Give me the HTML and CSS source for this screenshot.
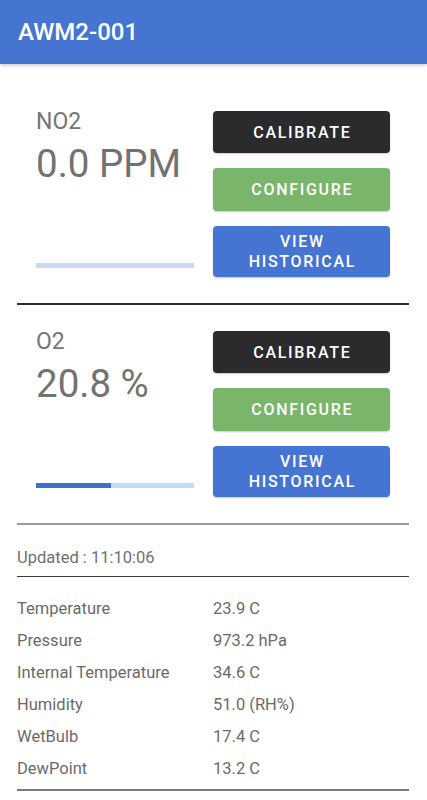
FILE: index.html
```html
<!DOCTYPE html>
<html lang="en">
<head>
<meta charset="utf-8">
<title>AWM2-001</title>
<link rel="stylesheet" href="styles.css">
</head>
<body>
<header class="appbar">AWM2-001</header>
<main class="content">
  <section class="sensor sensor-first">
    <div class="reading">
      <div class="label">NO2</div>
      <div class="value">0.0 PPM</div>
      <div class="bar"><div class="bar-fill" style="width:0%"></div></div>
    </div>
    <div class="actions">
      <button class="btn btn-dark">CALIBRATE</button>
      <button class="btn btn-green">CONFIGURE</button>
      <button class="btn btn-blue">VIEW<br>HISTORICAL</button>
    </div>
  </section>
  <section class="sensor sensor-second">
    <div class="reading">
      <div class="label">O2</div>
      <div class="value">20.8 %</div>
      <div class="bar"><div class="bar-fill" style="width:47.5%"></div></div>
    </div>
    <div class="actions">
      <button class="btn btn-dark">CALIBRATE</button>
      <button class="btn btn-green">CONFIGURE</button>
      <button class="btn btn-blue">VIEW<br>HISTORICAL</button>
    </div>
  </section>
  <div class="updated">Updated : 11:10:06</div>
  <div class="stats">
    <div class="stat-name">Temperature</div><div class="stat-val">23.9 C</div>
    <div class="stat-name">Pressure</div><div class="stat-val">973.2 hPa</div>
    <div class="stat-name">Internal Temperature</div><div class="stat-val">34.6 C</div>
    <div class="stat-name">Humidity</div><div class="stat-val">51.0 (RH%)</div>
    <div class="stat-name">WetBulb</div><div class="stat-val">17.4 C</div>
    <div class="stat-name">DewPoint</div><div class="stat-val">13.2 C</div>
  </div>
</main>
</body>
</html>
```
FILE: styles.css
```css
* { box-sizing: border-box; }
html, body { margin: 0; padding: 0; background: #ffffff; }
body { font-family: Roboto, "Noto Sans", "Liberation Sans", sans-serif; }

.appbar {
  height: 64px;
  line-height: 64px;
  padding-left: 18px;
  background: #4674d1;
  color: #ffffff;
  font-size: 24px;
  font-weight: 500;
  box-shadow: 0 1px 4px rgba(0,0,0,0.25);
  position: relative;
}

.content {
  padding: 21px 18px 0 17px;
}

.sensor {
  display: grid;
  grid-template-columns: 158px 177px;
  column-gap: 19px;
  padding: 26px 19px 26px 19px;
}
.sensor-first { border-bottom: 2px solid #2e2e2e; }
.sensor-second { border-bottom: 2px solid #9a9a9a; }

.reading {
  display: flex;
  flex-direction: column;
}
.label {
  font-size: 23px;
  line-height: 21px;
  color: #757575;
}
.value {
  font-size: 38.5px;
  line-height: 44px;
  margin-top: 10px;
  color: #727272;
}
.bar {
  margin-top: auto;
  margin-bottom: 9px;
  height: 5px;
  background: #c6daf1;
}
.bar-fill {
  height: 100%;
  background: #3e6fcb;
}

.actions {
  display: flex;
  flex-direction: column;
  gap: 15px;
}
.btn {
  border: none;
  border-radius: 4px;
  color: #ffffff;
  font-family: Roboto, "Noto Sans", sans-serif;
  font-size: 16px;
  font-weight: 500;
  letter-spacing: 1.7px;
  padding: 1px 0 0 1.7px;
  line-height: 20px;
  display: flex;
  align-items: center;
  justify-content: center;
  text-align: center;
  box-shadow: 0 1px 2px rgba(0,0,0,0.22);
}
.btn-dark { background: #2b2b2d; height: 42px; }
.btn-green { background: #79b56b; height: 43px; }
.btn-blue { background: #4574d2; height: 51px; }

.updated {
  padding: 23px 0 8px 0;
  font-size: 16.5px;
  line-height: 20px;
  color: #707070;
  border-bottom: 1px solid #3a3a3a;
}

.stats {
  display: grid;
  grid-template-columns: 1fr 1fr;
  padding: 16px 0 4px 0;
  border-bottom: 2px solid #7a7a7a;
  font-size: 16.5px;
  line-height: 32px;
  color: #6a6a6a;
}
```
